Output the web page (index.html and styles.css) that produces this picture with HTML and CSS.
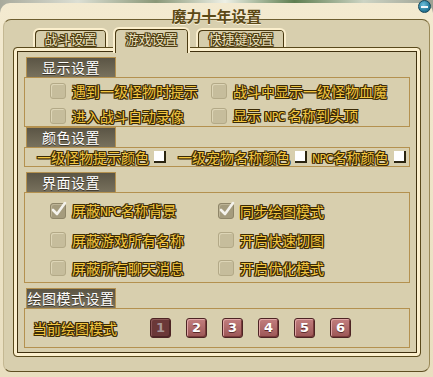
FILE: index.html
```html
<!DOCTYPE html>
<html lang="zh-cn">
<head>
  <meta charset="UTF-8">
  <title>魔力十年设置</title>
  <link rel="stylesheet" href="styles.css">
</head>
<body>
  <div class="window">
    <div class="titlebar">
      <span class="title">魔力十年设置</span>
      <span class="min-btn"><span></span></span>
    </div>
    <div class="panel">
      <div class="tabs">
        <div class="tab tab-fight">战斗设置</div>
        <div class="tab tab-game active">游戏设置</div>
        <div class="tab tab-keys">快捷键设置</div>
      </div>
      <div class="frame">
        <div class="group-title">显示设置</div>
        <div class="group-box opts opts-show">
          <div class="opt"><span class="check"></span><span>遇到一级怪物时提示</span></div>
          <div class="opt"><span class="check"></span><span>战斗中显示一级怪物血魔</span></div>
          <div class="opt"><span class="check"></span><span>进入战斗自动录像</span></div>
          <div class="opt"><span class="check"></span><span>显示 <span class="latin">NPC</span> 名称到头顶</span></div>
        </div>

        <div class="group-title">颜色设置</div>
        <div class="group-box colors">
          <span>一级怪物提示颜色</span><span class="swatch"></span>
          <span>一级宠物名称颜色</span><span class="swatch tight"></span>
          <span><span class="latin">NPC</span>名称颜色</span><span class="swatch"></span>
        </div>

        <div class="group-title">界面设置</div>
        <div class="group-box opts opts-ui">
          <div class="opt"><span class="check on"><svg width="18" height="18" viewBox="0 0 18 18"><path d="M3 9 L7 13 L15 2" fill="none" stroke="#f4f2ec" stroke-width="2.6" stroke-linecap="round" stroke-linejoin="round"/></svg></span><span>屏蔽<span class="latin">NPC</span>名称背景</span></div>
          <div class="opt"><span class="check on"><svg width="18" height="18" viewBox="0 0 18 18"><path d="M3 9 L7 13 L15 2" fill="none" stroke="#f4f2ec" stroke-width="2.6" stroke-linecap="round" stroke-linejoin="round"/></svg></span><span>同步绘图模式</span></div>
          <div class="opt"><span class="check"></span><span>屏蔽游戏所有名称</span></div>
          <div class="opt"><span class="check"></span><span>开启快速切图</span></div>
          <div class="opt"><span class="check"></span><span>屏蔽所有聊天消息</span></div>
          <div class="opt"><span class="check"></span><span>开启优化模式</span></div>
        </div>

        <div class="group-title">绘图模式设置</div>
        <div class="group-box modes">
          <span class="mode-label">当前绘图模式</span>
          <span class="mode-btn on">1</span>
          <span class="mode-btn">2</span>
          <span class="mode-btn">3</span>
          <span class="mode-btn">4</span>
          <span class="mode-btn">5</span>
          <span class="mode-btn">6</span>
        </div>
      </div>
    </div>
  </div>
</body>
</html>
```

FILE: styles.css
```css
body {
  margin: 0;
  width: 433px;
  height: 377px;
  overflow: hidden;
  font-family: "Noto Sans CJK SC", sans-serif;
  background: linear-gradient(90deg, #a8aa9c 0%, #dcdfd4 18%, #8a9878 36%, #eef0e6 52%, #5e7e50 68%, #cdd4c4 84%, #9ea294 100%);
}

.window {
  position: relative;
  margin-top: 3px;
  height: 374px;
  border-radius: 10px 10px 0 0;
  background: linear-gradient(#f3ead0, #e9dfc0);
}

.titlebar {
  height: 16px;
  text-align: center;
}

.title {
  font-size: 15px;
  line-height: 18px;
  color: #5b4916;
  font-weight: bold;
  text-shadow: 0 1px 0 #fbf3da;
}

.min-btn {
  position: absolute;
  top: -3px;
  right: 2px;
  width: 13px;
  height: 13px;
  box-sizing: border-box;
  border-radius: 50%;
  border: 1px solid #134559;
  background: radial-gradient(circle at 40% 35%, #6fc0dc, #2a7d9c 60%, #18506a);
  display: flex;
  align-items: center;
  justify-content: center;
}

.min-btn span {
  width: 7px;
  height: 2px;
  background: #f4f8fa;
}

.panel {
  height: 353px;
  box-sizing: border-box;
  margin: 0 3px;
  padding-top: 8px;
  background: #d8cfae;
  border-top: 1px solid #6e5e30;
  border-left: 1px solid #c4b892;
  border-right: 1px solid #9a8a58;
  border-bottom: 1px solid #5e4e22;
  border-radius: 8px;
}

/* tabs */
.tabs {
  display: flex;
  align-items: flex-start;
  height: 19px;
  margin-left: 29px;
}

.tab {
  height: 19px;
  box-sizing: border-box;
  padding-top: 1px;
  border: 2px solid #fbefcd;
  border-bottom: 0;
  border-radius: 6px 6px 0 0;
  box-shadow: inset 1px 1px 0 #4a3a12, inset -1px 0 0 #4a3a12;
  background: #d6cdab;
  text-align: center;
  font-size: 13px;
  line-height: 15px;
  color: #ebe1bf;
  text-shadow: -1px 0 #4b3b10, 1px 0 #4b3b10, 0 -1px #4b3b10, 0 1px #4b3b10,
    -1px -1px #4b3b10, 1px 1px #4b3b10, -1px 1px #4b3b10, 1px -1px #4b3b10;
}

.tab-fight { width: 75px; }
.tab-game { width: 77px; margin-left: 5px; }
.tab-keys { width: 90px; margin-left: 6px; }

.tab.active {
  position: relative;
  z-index: 1;
  height: 26px;
  margin-top: -1px;
  padding-top: 2px;
  background: #d8cfae;
}

/* inner frame */
.frame {
  height: 310px;
  box-sizing: border-box;
  margin: 0 8px 0 9px;
  padding: 9px 10px 0;
  border: 1px solid #5a4a1c;
  border-radius: 4px;
  box-shadow: inset 0 0 0 3px #fbefcd, inset 0 0 0 4px #3f300e;
}

.group-title {
  width: 90px;
  height: 20px;
  box-sizing: border-box;
  margin-left: 2px;
  border: 1px solid #b4914f;
  border-bottom: 0;
  background: linear-gradient(#5b5545, #78715d);
  color: #ffffff;
  font-size: 14px;
  line-height: 19px;
  text-align: center;
  letter-spacing: 0.5px;
  text-shadow: 0 1px 0 #3a3428;
}

.group-box {
  border: 1px solid #b4914f;
  box-sizing: border-box;
  color: #f4c741;
  font-size: 14px;
  text-shadow: -1px 0 #3a2a06, 1px 0 #3a2a06, 0 -1px #3a2a06, 0 1px #3a2a06,
    -1px -1px #3a2a06, 1px 1px #3a2a06, -1px 1px #3a2a06, 1px -1px #3a2a06;
}

.latin {
  font-family: "DejaVu Sans Condensed", "DejaVu Sans", sans-serif;
  font-size: 12px;
  letter-spacing: -0.5px;
}

/* checkbox grids */
.opts {
  display: grid;
  padding-left: 25px;
}

.opts-show {
  height: 50px;
  grid-template-columns: 161px 1fr;
  row-gap: 6px;
  padding-top: 5px;
}

.opts-ui {
  height: 91px;
  margin-bottom: 5px;
  grid-template-columns: 168px 1fr;
  row-gap: 7px;
  padding-top: 10px;
}

.opt {
  display: flex;
  align-items: center;
  gap: 6px;
  height: 16px;
  line-height: 16px;
  white-space: nowrap;
}

.check {
  position: relative;
  flex: none;
  width: 16px;
  height: 16px;
  box-sizing: border-box;
  border-radius: 3px;
  border: 1px solid #b3a987;
  background: #c6bd9c;
  box-shadow: inset 1px 1px 0 #ddd5b6;
}

.check.on {
  background: #a49b7d;
  border-color: #8e8568;
  box-shadow: inset 1px 1px 0 #bdb496;
}

.check svg {
  position: absolute;
  left: -1px;
  top: -3px;
}

/* colour row */
.colors {
  display: flex;
  align-items: center;
  height: 20px;
  margin-bottom: 5px;
  padding-left: 12px;
  white-space: nowrap;
}

.colors > span {
  flex: none;
}

.swatch {
  width: 12px;
  height: 12px;
  box-sizing: border-box;
  margin: 0 12px 0 5px;
  background: #ffffff;
  border-right: 2px solid #2a2410;
  border-bottom: 2px solid #2a2410;
}

.swatch.tight {
  margin-right: 5px;
}

/* draw modes */
.modes {
  display: flex;
  align-items: center;
  gap: 15px;
  height: 40px;
  padding-left: 8px;
}

.mode-label {
  width: 102px;
}

.mode-btn {
  width: 21px;
  height: 20px;
  box-sizing: border-box;
  border-radius: 3px;
  border: 1px solid #4d2424;
  background: linear-gradient(#c27e7e, #9c5656);
  box-shadow: inset 1px 1px 0 #e0a6a6, inset -1px -1px 0 #783a3a;
  color: #ffffff;
  font-family: "DejaVu Sans", sans-serif;
  font-weight: bold;
  font-size: 13px;
  line-height: 18px;
  text-align: center;
  text-shadow: 0 1px 0 #5a2a2a;
}

.mode-btn.on {
  background: #6b3838;
  box-shadow: inset 1px 1px 0 #8c5858, inset -1px -1px 0 #4e2626;
  color: #a89696;
  text-shadow: none;
}
```
